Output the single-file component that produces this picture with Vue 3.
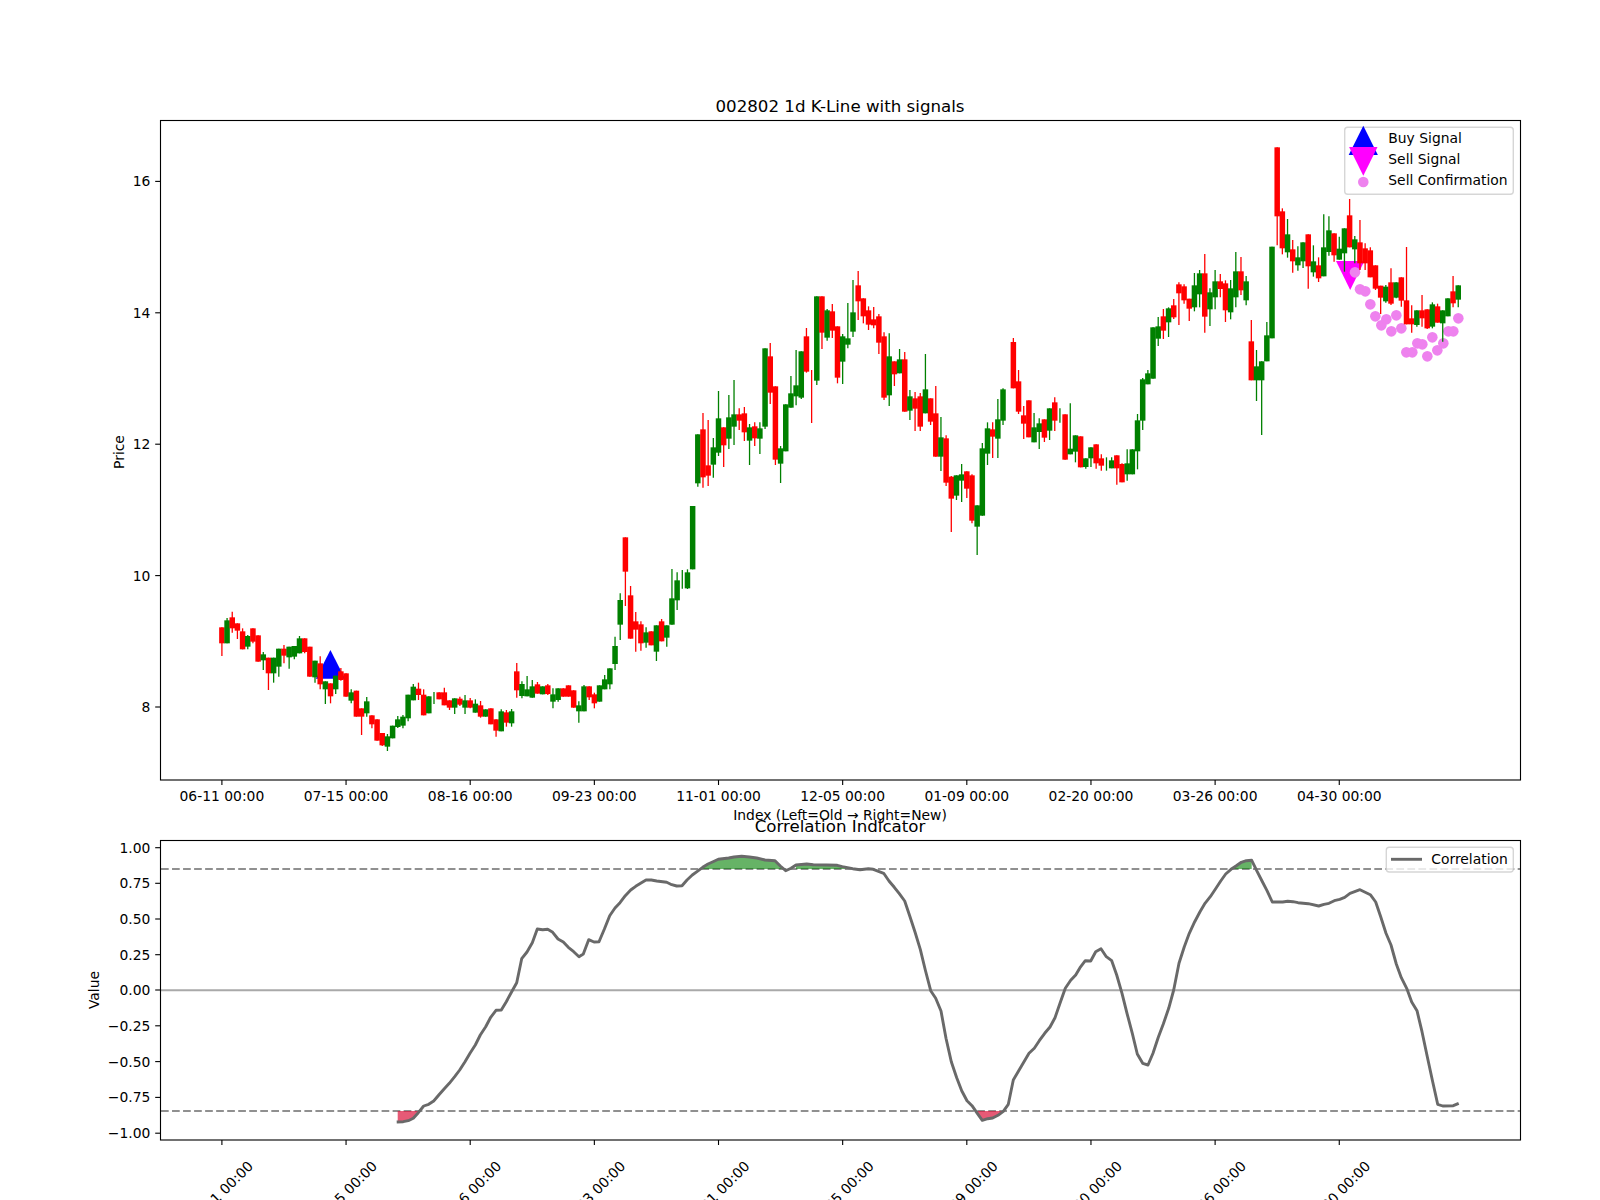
<script setup>
const X0 = 221.9
const STEP = 5.173
const xAt = (i) => X0 + STEP * i

// Candles traced from the chart: colour, body top, body bottom, wick top, wick bottom.
// Each block is measured at 3x from its own vertical origin.
const blocks = [
  { base: 560, rows: [
    'r 202 250 202 288','g 181 250 174 250','r 172 205 155 218','r 190 212 190 237','r 214 268 205 268','g 228 260 225 268',
    'r 205 245 205 250','r 226 305 226 305','g 283 301 276 330','r 293 340 293 390','g 293 340 293 368','g 266 320 266 350',
    'r 266 287 255 310','g 260 292 260 326','g 258 290 258 298','g 235 280 228 280','r 235 276 235 280','r 260 350 260 350',
    'g 302 352 302 368','r 310 373 289 388','g 364 388 364 432','r 370 409 370 430','g 347 388 347 402','r 334 360 324 362',
    'r 340 410 340 410','g 397 422 388 430','r 392 470 392 470','r 445 470 445 525','g 424 460 411 470','r 466 493 466 505',
    'r 478 542 478 542','r 519 556 519 558','g 529 560 522 573','g 497 535 497 535','g 478 501 468 504','g 470 497 465 505',
    'g 404 475 404 484','g 380 421 372 421','r 386 405 368 420','r 404 466 388 466','g 409 460 409 460','g 0 0 396 432',
    'r 397 418 397 418','r 397 436 383 436','r 421 443 421 450','g 415 443 415 462','r 416 434 410 438','g 421 443 405 462',
    'r 421 443 414 445','g 431 458 418 458','r 436 470 423 473','g 448 470 448 470','r 445 493 445 493','r 478 512 478 530',
    'g 454 514 448 514','r 457 488 450 500','g 454 490 447 500','r 334 391 309 413',
  ] },
  { base: 510, rows: [
    'g 522 558 514 565','g 538 559 498 559','g 529 563 510 563','r 523 551 516 551','g 529 553 529 553','r 526 552 522 555',
    'g 553 575 535 595','g 535 570 535 575','r 535 560 535 560','r 526 560 526 560','r 541 593 541 593','g 586 604 574 638',
    'g 529 604 525 604','r 529 562 529 570','r 553 580 548 595','g 526 575 526 575','g 508 538 495 538','g 475 523 475 538',
    'g 408 462 380 480','g 270 344 250 390','r 82 185 82 288','r 256 386 228 386','r 334 359 306 425','r 343 400 334 422',
    'g 367 398 352 413','r 364 406 364 406','g 346 425 346 453','r 334 394 327 394','g 346 383 346 410','g 265 344 177 344',
    'g 211 271 187 300','g 0 0 180 236','g 187 235 178 237',
  ] },
  { base: 260, rows: [
    'g 738 928 738 928','g 523 670 523 680','r 508 652 459 683','r 616 647 480 678','g 562 614 534 653','g 475 578 393 588',
    'r 502 556 502 621','g 472 536 405 567','g 463 500 360 555','r 463 482 445 510','r 460 517 441 543','g 502 542 492 615',
    'r 499 535 487 558','g 505 536 487 582','g 265 500 265 507','r 289 398 249 432','r 379 599 379 615','g 565 611 558 669',
    'g 433 574 433 574','g 400 443 348 443','g 376 409 270 436','g 274 413 274 417','r 229 335 204 338','r 0 0 330 489',
    'g 109 362 109 375','r 109 218 109 267','g 151 233 147 242','r 154 212 132 234','r 199 353 199 370','g 229 305 222 372',
    'g 235 254 129 265','g 157 215 60 231','r 76 124 33 180','r 115 169 115 190','r 151 194 139 210','r 178 196 141 205',
    'r 169 248 162 282','r 229 413 217 420','g 289 406 220 438','r 304 343 304 378','g 298 340 267 340','r 298 455 276 455',
    'g 409 452 390 480','r 415 446 396 513','r 409 500 399 513','g 388 460 282 460','r 415 485 415 495','r 460 590 378 590',
    'g 532 590 471 633','r 535 668 526 678',
  ] },
  { base: 340, rows: [
    'r 410 476 408 576','g 406 467 406 480','g 403 422 372 486','r 394 446 394 474','r 406 542 403 550','g 496 560 496 645',
    'g 325 527 309 527','g 265 341 247 375','r 268 290 247 354','g 238 296 177 354','g 148 242 145 255','x',
  ] },
  { base: 240, rows: [
    'r 306 445 294 445','r 424 515 390 522','r 526 551 498 597','r 481 592 481 592','g 562 607 519 607','g 550 576 535 627',
    'r 538 593 538 606','g 505 572 505 600','r 487 542 472 573','g 0 0 505 548','r 523 659 523 659','g 626 643 490 643',
    'g 586 635 586 667','r 589 682 589 682','g 655 681 655 686','g 622 655 622 681','r 613 670 613 686','r 655 677 643 692',
    'g 0 0 652 692','g 661 685 652 685','r 646 685 646 734','r 672 727 670 727','g 670 703 628 722','g 628 703 628 703',
    'g 541 634 522 688','g 418 542 414 570','g 400 433 390 433','g 262 416 262 416','g 259 296 231 318','r 229 272 207 297',
    'g 205 247 202 291','r 196 232 177 237','r 133 160 127 255','r 139 181 133 191','r 176 206 176 243','g 136 202 99 214',
    'g 100 163 90 202','r 100 230 42 278','g 157 208 145 258','g 124 172 90 208','r 124 147 102 172','r 130 211 121 246',
    'g 145 217 120 238','g 94 172 36 202','r 94 151 51 165','g 124 181 108 196',
  ] },
  { base: 140, rows: [
    'r 604 721 540 721','g 679 721 630 783','g 664 721 664 885','g 586 664 546 664','g 320 595 320 595','r 22 229 22 316',
    'r 214 325 205 343','g 283 337 237 353','r 328 364 300 398','g 352 376 319 392','g 307 364 307 384','r 283 379 283 446',
    'g 364 397 316 410','r 376 415 352 426','g 322 409 223 409','g 271 336 229 347','r 280 346 280 365',
  ] },
  { base: 110, rows: [
    'g 416 449 380 449','g 355 430 355 485','r 316 412 267 412','g 388 418 378 460','r 397 460 330 480','r 415 460 400 480',
    'r 421 502 412 502','r 466 536 466 540','r 527 563 527 612','g 530 574 525 578','r 517 581 475 585','g 517 563 517 565',
    'r 502 572 502 590','r 571 643 411 643','r 625 643 586 668','g 601 645 601 650','r 601 625 555 650','r 598 655 598 657',
    'g 583 650 577 655','r 589 638 581 638','g 601 640 601 695','g 565 619 565 619','r 544 580 498 592','g 526 569 526 592',
  ] },
]

const candles = []
blocks.forEach(({ base, rows }) => {
  rows.forEach((row) => {
    const i = candles.length
    const [c, bt, bb, wt, wb] = row.split(' ').map((v, k) => (k ? Number(v) / 3 + base : v))
    if (c === 'x') {
      candles.push({ i, skip: true })
      return
    }
    candles.push({
      i,
      up: c === 'g',
      x: xAt(i),
      hasBody: bb > bt,
      bt,
      h: bb - bt,
      wt,
      wb,
    })
  })
})
const bars = candles.filter((c) => !c.skip)

const confirmations = [
  [345,487],[360,538],[376,544],[391,583],[406,619],[424,646],[439,628],[454,664],[469,616],[484,655],[499,727],
  [517,727],[532,700],[547,703],[562,739],[577,682],[592,721],[610,700],[625,664],[640,664],[655,625],
].map(([x, y]) => ({ x: 1240 + x / 3, y: 110 + y / 3 }))

const priceTicks = [
  { label: '16', y: 181.4 }, { label: '14', y: 312.8 }, { label: '12', y: 444.2 },
  { label: '10', y: 575.6 }, { label: '8', y: 707 },
]
const valueTicks = [
  ['1.00', 847.7], ['0.75', 883.3], ['0.50', 919], ['0.25', 954.7], ['0.00', 990],
  ['\u22120.25', 1025.8], ['\u22120.50', 1061.6], ['\u22120.75', 1097.4], ['\u22121.00', 1133.2],
].map(([label, y]) => ({ label, y }))

const dates = ['06-11', '07-15', '08-16', '09-23', '11-01', '12-05', '01-09', '02-20', '03-26', '04-30']
const timeTicks = dates.map((d, k) => ({ label: `${d} 00:00`, x: xAt(k * 24) }))

const toPts = (ox, list) => list.map(([x, y]) => `${(ox + x / 3).toFixed(1)},${(800 + y / 3).toFixed(1)}`).join(' ')

const s5 = [[950,966],[970,965],[985,962],[1000,955],[1015,938],[1031,918],[1046,913],[1061,903],[1077,884],[1093,866],[1108,850],[1124,830],[1139,810],[1155,785],[1170,760],[1186,735],[1201,705],[1217,680],[1232,652],[1248,631],[1264,630],[1279,605],[1295,575],[1310,548],[1325,476],[1341,456],[1357,428],[1372,387],[1388,389],[1403,388],[1418,397],[1434,417],[1450,426],[1465,442],[1481,455],[1497,470]]
const s6 = [[10,462],[26,419],[42,426],[57,425],[73,388],[89,347],[105,324],[120,308],[136,287],[152,270],[167,259],[183,249],[198,240],[214,240],[230,243],[260,247],[275,254],[290,258],[306,257],[321,240],[337,225],[352,214],[368,202],[384,192],[399,185],[415,178],[446,174],[462,171],[485,169],[508,171],[530,174],[555,180],[585,182],[601,198],[617,212],[633,205],[648,195],[680,192],[700,194],[740,195],[772,196],[787,200],[818,206],[840,209],[865,206],[880,208],[911,220],[927,243],[943,262],[958,281],[974,303],[990,350],[1005,396],[1021,448],[1036,510],[1052,572],[1067,595],[1083,633],[1098,715],[1114,785],[1130,833],[1145,872],[1161,902],[1176,917],[1192,940],[1207,961],[1223,956],[1238,954],[1254,946],[1270,934],[1285,913],[1300,840],[1316,812],[1347,760],[1363,745],[1378,722],[1394,700],[1410,681],[1425,653],[1440,610],[1456,565],[1472,541],[1487,525]]
const s7 = [[0,503],[16,482],[32,483],[47,455],[63,446],[79,470],[95,482],[110,525],[126,580],[141,640],[157,700],[172,762],[188,790],[204,795],[219,760],[235,712],[250,672],[266,625],[281,570],[297,490],[313,440],[328,400],[344,365],[360,335],[375,310],[391,290],[406,268],[422,243],[437,222],[453,208],[468,198],[484,187],[499,182],[515,181],[530,212],[546,243],[561,272],[577,306],[608,306],[623,304],[639,305],[654,308],[685,311],[716,318],[732,313],[747,310],[763,302],[779,298],[794,292],[810,280],[840,269],[871,284],[887,306],[902,350],[918,400],[933,435],[949,492],[964,533],[980,565],[995,606],[1011,632],[1026,695],[1042,770],[1057,840],[1073,913],[1088,918],[1120,917],[1136,910]]

const corrLine = [toPts(80, s5), toPts(580, s6), toPts(1080, s7)].join(' ')

const fills = [
  { cls: 'fill-low', pts: toPts(80, [[953,933],[953,966],[970,965],[985,962],[1000,955],[1015,938],[1020,933]]) },
  { cls: 'fill-high', pts: toPts(580, [[360,207],[368,202],[384,192],[399,185],[415,178],[446,174],[462,171],[485,169],[508,171],[530,174],[555,180],[585,182],[601,198],[610,207]]) },
  { cls: 'fill-high', pts: toPts(580, [[648,207],[648,195],[680,192],[700,194],[740,195],[772,196],[787,200],[800,207]]) },
  { cls: 'fill-high', pts: toPts(1080, [[455,207],[468,198],[484,187],[499,182],[515,181],[515,207]]) },
  { cls: 'fill-low', pts: toPts(580, [[1188,933],[1207,961],[1223,956],[1238,954],[1254,946],[1270,934],[1266,933]]) },
]
</script>

<template>
  <svg class="figure" width="1600" height="1200" viewBox="0 0 1600 1200">
    <!-- price panel -->
    <g>
      <polygon class="buy" points="330.4,650 345,678.7 315.8,678.7" />
      <polygon class="sell" points="1336,261 1364.4,261 1350.2,290" />
      <circle v-for="(d, k) in confirmations" :key="k" class="confirm" :cx="d.x" :cy="d.y" r="5.3" />

      <g v-for="c in bars" :key="c.i">
        <line :class="c.up ? 'wick-up' : 'wick-down'" :x1="c.x" :x2="c.x" :y1="c.wt" :y2="c.wb" />
        <rect v-if="c.hasBody" :class="c.up ? 'body-up' : 'body-down'" :x="c.x - 2.75" :y="c.bt" width="5.5" :height="c.h" />
      </g>

      <g v-for="t in priceTicks" :key="t.label">
        <line class="tick" x1="155.2" x2="160" :y1="t.y" :y2="t.y" />
        <text class="label" x="150.3" :y="t.y + 5" text-anchor="end">{{ t.label }}</text>
      </g>
      <g v-for="t in timeTicks" :key="t.label">
        <line class="tick" :x1="t.x" :x2="t.x" y1="780" y2="785" />
        <text class="label" :x="t.x" y="801" text-anchor="middle">{{ t.label }}</text>
      </g>

      <text class="label" x="840" y="820" text-anchor="middle">Index (Left=Old → Right=New)</text>
      <text class="label" transform="rotate(-90 124 452)" x="124" y="452" text-anchor="middle">Price</text>
      <text class="title" x="840" y="112" text-anchor="middle">002802 1d K-Line with signals</text>

      <rect class="legend" x="1344.7" y="127.3" width="168.6" height="67" rx="3" />
      <polygon class="buy" points="1363.3,125.7 1377.9,155 1348.7,155" />
      <polygon class="sell" points="1349.1,147 1377.5,147 1363.3,175.7" />
      <circle class="confirm" cx="1363.3" cy="182" r="5.3" />
      <text class="label" x="1388.3" y="143.3">Buy Signal</text>
      <text class="label" x="1388.3" y="164.3">Sell Signal</text>
      <text class="label" x="1388.3" y="185.3">Sell Confirmation</text>

      <rect class="spine" x="160.5" y="120.5" width="1360" height="659.5" />
    </g>

    <!-- correlation panel -->
    <g>
      <line class="dash" x1="161" x2="1520" y1="869" y2="869" />
      <line class="dash" x1="161" x2="1520" y1="1111" y2="1111" />
      <line class="zero" x1="160" x2="1520" y1="990.2" y2="990.2" />
      <polygon v-for="(f, k) in fills" :key="k" :class="f.cls" :points="f.pts" />
      <polyline class="corr" :points="corrLine" />

      <g v-for="t in valueTicks" :key="t.label">
        <line class="tick" x1="155.2" x2="160" :y1="t.y" :y2="t.y" />
        <text class="label" x="150.3" :y="t.y + 5" text-anchor="end">{{ t.label }}</text>
      </g>
      <g v-for="t in timeTicks" :key="t.label">
        <line class="tick" :x1="t.x" :x2="t.x" y1="1140" y2="1145" />
        <text class="label" :x="t.x + 32" y="1167" text-anchor="end" :transform="`rotate(-45 ${t.x + 32} 1167)`">{{ t.label }}</text>
      </g>

      <text class="label" transform="rotate(-90 99 990)" x="99" y="990" text-anchor="middle">Value</text>
      <text class="title" x="840" y="832" text-anchor="middle">Correlation Indicator</text>

      <rect class="legend" x="1386.3" y="847.3" width="127" height="24.7" rx="3" />
      <line class="corr" x1="1391" x2="1422" y1="859.3" y2="859.3" />
      <text class="label" x="1431.3" y="864">Correlation</text>

      <rect class="spine" x="160.5" y="840.5" width="1360" height="299.5" />
    </g>
  </svg>
</template>

<style>
html, body {
  margin: 0;
  background: #ffffff;
}
</style>

<style scoped>
.figure {
  display: block;
  background: #ffffff;
  font-family: "DejaVu Sans", sans-serif;
}
.label {
  font-size: 13.89px;
  fill: #000000;
}
.title {
  font-size: 16.67px;
  fill: #000000;
}
.spine {
  fill: none;
  stroke: #000000;
  stroke-width: 1.11px;
}
.tick {
  stroke: #000000;
  stroke-width: 1.11px;
}
.wick-up {
  stroke: #008000;
  stroke-width: 1.3px;
}
.wick-down {
  stroke: #ff0000;
  stroke-width: 1.3px;
}
.body-up {
  fill: #008000;
}
.body-down {
  fill: #ff0000;
}
.buy {
  fill: #0000ff;
}
.sell {
  fill: #ff00ff;
}
.confirm {
  fill: #ee82ee;
}
.legend {
  fill: #ffffff;
  fill-opacity: 0.8;
  stroke: #cccccc;
  stroke-opacity: 0.8;
  stroke-width: 1.39px;
}
.dash {
  stroke: #808080;
  stroke-opacity: 0.87;
  stroke-width: 2.08px;
  stroke-dasharray: 7.7 3.33;
}
.zero {
  stroke: #a9a9a9;
  stroke-width: 2.08px;
}
.corr {
  fill: none;
  stroke: #696969;
  stroke-width: 2.9px;
  stroke-linejoin: round;
}
.fill-high {
  fill: #008000;
  fill-opacity: 0.6;
}
.fill-low {
  fill: #dc143c;
  fill-opacity: 0.7;
}
</style>
